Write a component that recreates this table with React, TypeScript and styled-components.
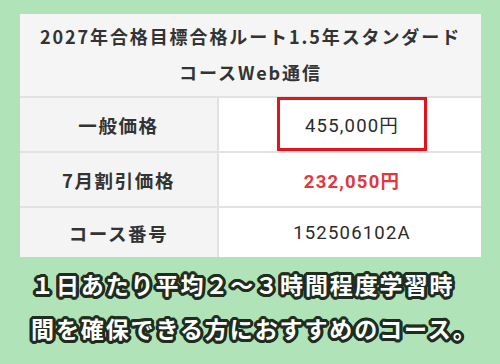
import React from 'react';
import styled, { createGlobalStyle } from 'styled-components';

const GlobalStyle = createGlobalStyle`
    html, body {
        margin: 0;
        padding: 0;
        background: #b1e3b8;
    }
    * {
        box-sizing: border-box;
    }
`;

const rows = [
    { label: '一般価格', value: '455,000円', boxed: true, height: 55 },
    { label: '7月割引価格', value: '232,050円', sale: true, height: 55 },
    { label: 'コース番号', value: '152506102A', height: 51 },
];

export default function App() {
    return (
        <Page>
            <GlobalStyle />
            <Card>
                <Header>
                    2027年合格目標合格ルート1.5年スタンダード<br />コースWeb通信
                </Header>
                {rows.map(row => (
                    <Row key={row.label} $height={row.height}>
                        <Label>{row.label}</Label>
                        <ValueCell>
                            {row.boxed ? (
                                <RedBox>{row.value}</RedBox>
                            ) : (
                                <Value $sale={row.sale}>{row.value}</Value>
                            )}
                        </ValueCell>
                    </Row>
                ))}
            </Card>
            <Caption>
                １日あたり平均２〜３時間程度学習時<br />間を確保できる方におすすめのコース。
            </Caption>
        </Page>
    );
}

const Page = styled.div`
    width: 500px;
    height: 364px;
    overflow: hidden;
    background: #b1e3b8;
    padding: 14px 19px 0 20px;
    font-family: "Noto Sans CJK JP", "Noto Sans", sans-serif;
`;

const Card = styled.div`
    width: 461px;
    background: #f5f5f5;
`;

const Header = styled.div`
    height: 82px;
    padding-top: 4px;
    text-align: center;
    font-size: 18px;
    font-weight: 700;
    line-height: 36px;
    letter-spacing: 1.9px;
    color: #333;
`;

const Row = styled.div<{ $height: number }>`
    display: grid;
    grid-template-columns: 199px 1fr;
    height: ${props => props.$height}px;
    border-top: 2px solid #e2e2e2;
`;

const Label = styled.div`
    display: flex;
    align-items: center;
    justify-content: center;
    background: #f4f4f4;
    border-right: 2px solid #e2e2e2;
    font-size: 18.5px;
    font-weight: 700;
    letter-spacing: 1.6px;
    color: #333;
`;

const ValueCell = styled.div`
    display: flex;
    align-items: center;
    justify-content: center;
    background: #fff;
    padding-left: 4px;
`;

const Value = styled.span<{ $sale?: boolean }>`
    font-family: Roboto, "Noto Sans CJK JP", sans-serif;
    font-size: 18.5px;
    letter-spacing: 1.2px;
    font-weight: ${props => props.$sale ? 700 : 400};
    color: ${props => props.$sale ? '#e0383e' : '#2a2a2a'};
`;

const RedBox = styled(Value)`
    align-self: stretch;
    width: 150px;
    display: flex;
    align-items: center;
    justify-content: center;
    border: 3px solid #e3121b;
    margin-top: -1px;
`;

const Caption = styled.div`
    margin-top: 5px;
    padding-left: 11px;
    font-size: 23px;
    font-weight: 700;
    line-height: 44px;
    letter-spacing: 1.9px;
    white-space: nowrap;
    color: #fff;
    text-shadow:
        3px 0 0 #1e2d20, -3px 0 0 #1e2d20, 0 3px 0 #1e2d20, 0 -3px 0 #1e2d20,
        2px 2px 0 #1e2d20, -2px 2px 0 #1e2d20, 2px -2px 0 #1e2d20, -2px -2px 0 #1e2d20,
        3px 1px 0 #1e2d20, -3px 1px 0 #1e2d20, 3px -1px 0 #1e2d20, -3px -1px 0 #1e2d20,
        1px 3px 0 #1e2d20, -1px 3px 0 #1e2d20, 1px -3px 0 #1e2d20, -1px -3px 0 #1e2d20,
        0 0 2px #1e2d20;
`;
